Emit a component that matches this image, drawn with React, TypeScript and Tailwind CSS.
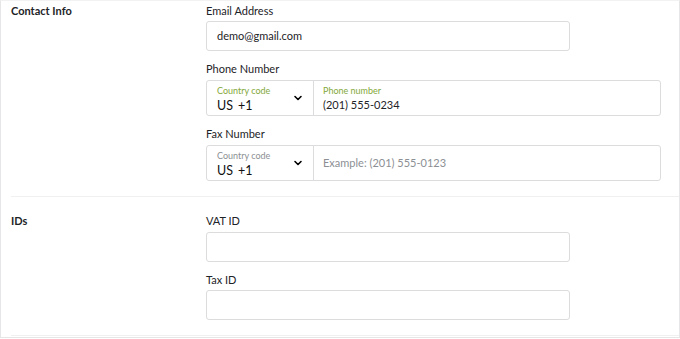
import { ChevronDown } from "lucide-react"

function Label({ children, className = "" }: { children: React.ReactNode; className?: string }) {
  return <div className={`text-[11px] leading-[16px] text-[#1d2327] ${className}`}>{children}</div>
}

function TextInput({ value, placeholder }: { value?: string; placeholder?: string }) {
  return (
    <div className="flex h-[30px] w-[364px] items-center rounded-[3px] border border-[#dcdcde] bg-white px-[10px] text-[11px] text-[#1d2327]">
      {value ?? <span className="text-[#8c8f94]">{placeholder}</span>}
    </div>
  )
}

function PhoneInput({ value, active }: { value?: string; active?: boolean }) {
  const small = active ? "text-[#84a83a]" : "text-[#8c8f94]"
  return (
    <div className="flex h-[36px] w-[455px] rounded-[3px] border border-[#dcdcde] bg-white">
      <div className="flex w-[107px] items-center justify-between border-r border-[#dcdcde] pl-[10px] pr-[9px]">
        <div className="flex flex-col pt-[3px]">
          <span className={`text-[9px] leading-[12px] ${small}`}>Country code</span>
          <span className="text-[12.5px] leading-[17px] text-[#111]">
            US<span className="ml-[5px]">+1</span>
          </span>
        </div>
        <ChevronDown className="h-[12px] w-[12px] text-black" strokeWidth={3.2} />
      </div>
      <div className="flex flex-1 flex-col justify-center pl-[9px] pt-[1px]">
        {active ? (
          <>
            <span className={`text-[9px] leading-[12px] ${small}`}>Phone number</span>
            <span className="text-[11px] leading-[15px] text-[#1d2327]">{value}</span>
          </>
        ) : (
          <span className="text-[11px] text-[#8c8f94]">Example: (201) 555-0123</span>
        )}
      </div>
    </div>
  )
}

export default function App() {
  return (
    <div className="h-[339px] w-[680px] overflow-hidden bg-white font-['Lato',sans-serif]">
      <div className="border-x border-b border-t border-[#e6e6e8] border-t-[#f2f2f3]">
        <div className="ml-[10px] flex border-b border-[#f0f0f1] pb-[15px] pt-[2px]">
          <div className="w-[195px] text-[11px] font-bold leading-[16px] text-[#1d2327]">Contact Info</div>
          <div className="flex flex-col">
            <Label className="mb-[2px]">Email Address</Label>
            <TextInput value="demo@gmail.com" />
            <Label className="mb-[3px] mt-[10px]">Phone Number</Label>
            <PhoneInput value="(201) 555-0234" active />
            <Label className="mb-[3px] mt-[10px]">Fax Number</Label>
            <PhoneInput />
          </div>
        </div>
        <div className="mb-[1px] ml-[10px] flex border-b border-[#f0f0f1] pb-[15px] pt-[16px]">
          <div className="w-[195px] text-[11px] font-bold leading-[16px] text-[#1d2327]">IDs</div>
          <div className="flex flex-col">
            <Label className="mb-[3px]">VAT ID</Label>
            <TextInput />
            <Label className="mb-[2px] mt-[10px]">Tax ID</Label>
            <TextInput />
          </div>
        </div>
      </div>
    </div>
  )
}
